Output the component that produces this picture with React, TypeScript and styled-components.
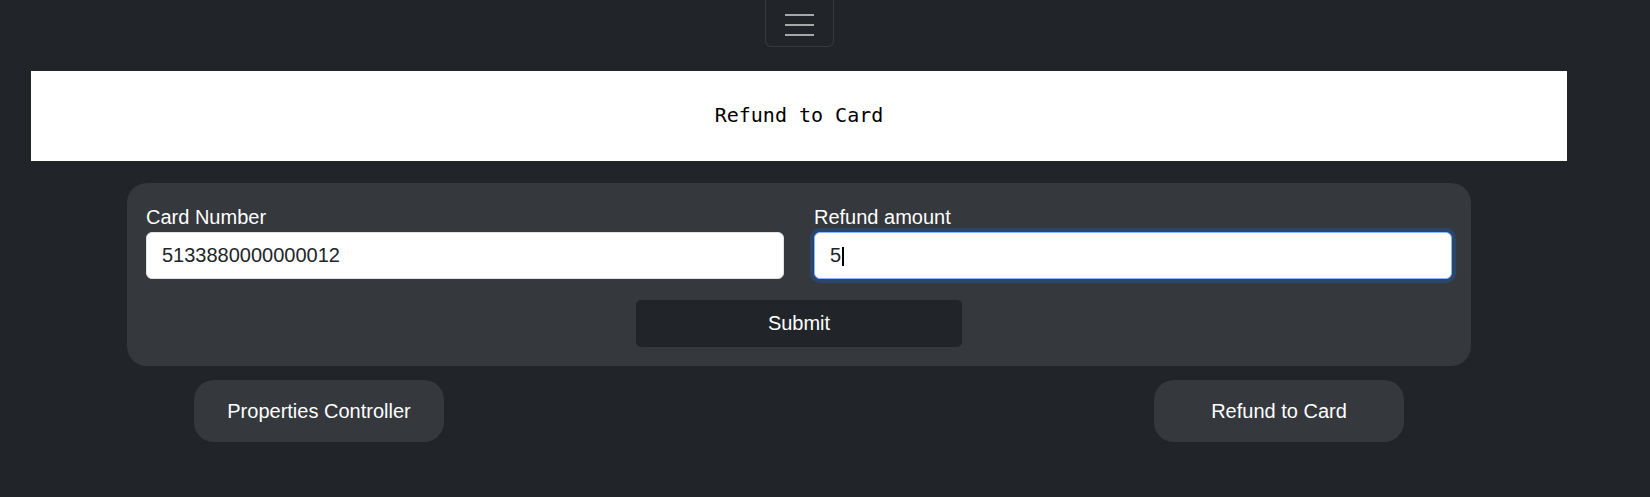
import styled, { createGlobalStyle } from "styled-components";

const GlobalStyle = createGlobalStyle`
	body {
		margin: 0;
		background-color: #212529;
		font-family: "Liberation Sans", Arial, sans-serif;
		color: #ffffff;
	}
`;

const StyledPage = styled.div`
	width: 1598px;
	display: flex;
	flex-direction: column;
	align-items: center;
`;

const Toggler = styled.button`
	width: 69px;
	height: 51px;
	margin-top: -4px;
	padding: 0;
	background: transparent;
	border: 1px solid rgba(255, 255, 255, 0.1);
	border-radius: 6px;
	display: flex;
	align-items: center;
	justify-content: center;
	padding-top: 4px;
	svg {
		margin-left: 2px;
	}
`;

const HeaderBar = styled.div`
	align-self: stretch;
	margin: 24px 31px 0;
	height: 90px;
	box-sizing: border-box;
	padding-bottom: 3px;
	background-color: #ffffff;
	display: flex;
	align-items: center;
	justify-content: center;
	h1 {
		margin: 0;
		font-family: "DejaVu Sans Mono", "Liberation Mono", monospace;
		font-size: 20px;
		font-weight: 400;
		color: #000000;
	}
`;

const FormCard = styled.form`
	width: 1344px;
	box-sizing: border-box;
	margin-top: 22px;
	padding: 20px 19px 19px;
	background-color: #35383d;
	border-radius: 20px;
	display: flex;
	flex-direction: column;
	align-items: center;
	.fields {
		align-self: stretch;
		display: grid;
		grid-template-columns: 1fr 1fr;
		column-gap: 30px;
	}
`;

const Field = styled.div`
	display: flex;
	flex-direction: column;
	label {
		font-size: 20px;
		line-height: 29px;
		color: #ffffff;
	}
`;

const InputWrap = styled.div`
	position: relative;
`;

const TextInput = styled.input<{ $focused?: boolean }>`
	width: 100%;
	box-sizing: border-box;
	height: 47px;
	padding: 0 15px;
	font-family: "Liberation Sans", Arial, sans-serif;
	font-size: 20px;
	color: #212529;
	background-color: #ffffff;
	border: 1px solid ${({ $focused }) => ($focused ? "#86b7fe" : "#dee2e6")};
	border-radius: 6px;
	outline: none;
	box-shadow: ${({ $focused }) => ($focused ? "0 0 0 4px rgba(13, 110, 253, 0.25)" : "none")};
`;

const Caret = styled.span`
	position: absolute;
	left: 28px;
	top: 15px;
	width: 2px;
	height: 19px;
	background-color: #000000;
`;

const SubmitButton = styled.button`
	margin-top: 21px;
	width: 326px;
	height: 47px;
	border: none;
	border-radius: 5px;
	background-color: #212529;
	color: #ffffff;
	font-family: "Liberation Sans", Arial, sans-serif;
	font-size: 20px;
`;

const NavRow = styled.div`
	width: 1210px;
	margin-top: 14px;
	display: flex;
	justify-content: space-between;
`;

const NavButton = styled.button`
	width: 250px;
	height: 62px;
	border: none;
	border-radius: 20px;
	background-color: #35383d;
	color: #ffffff;
	font-family: "Liberation Sans", Arial, sans-serif;
	font-size: 20px;
`;

const MenuIcon = () => (
	<svg width="30" height="30" viewBox="0 0 30 30">
		<path d="M0 6h29M0 16h29M0 26h29" stroke="rgba(255,255,255,0.6)" strokeWidth="2" />
	</svg>
);

const App = (): JSX.Element => {
	return (
		<>
			<GlobalStyle />
			<StyledPage>
				<Toggler type="button" aria-label="Toggle navigation">
					<MenuIcon />
				</Toggler>
				<HeaderBar>
					<h1>Refund to Card</h1>
				</HeaderBar>
				<FormCard onSubmit={(e) => e.preventDefault()}>
					<div className="fields">
						<Field>
							<label htmlFor="cardNumber">Card Number</label>
							<InputWrap>
								<TextInput id="cardNumber" defaultValue="5133880000000012" />
							</InputWrap>
						</Field>
						<Field>
							<label htmlFor="refundAmount">Refund amount</label>
							<InputWrap>
								<TextInput id="refundAmount" defaultValue="5" $focused />
								<Caret />
							</InputWrap>
						</Field>
					</div>
					<SubmitButton type="submit">Submit</SubmitButton>
				</FormCard>
				<NavRow>
					<NavButton type="button">Properties Controller</NavButton>
					<NavButton type="button">Refund to Card</NavButton>
				</NavRow>
			</StyledPage>
		</>
	);
};

export default App;
